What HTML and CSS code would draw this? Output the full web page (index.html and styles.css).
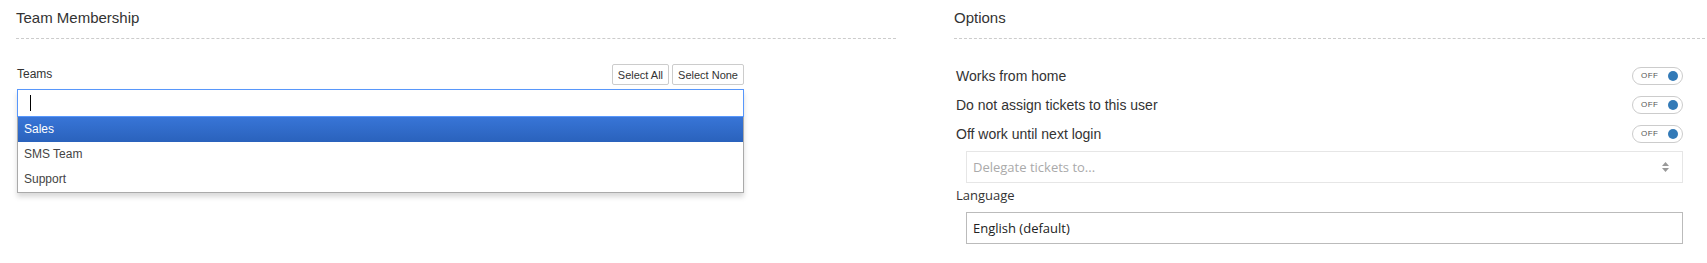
FILE: index.html
```html
<!DOCTYPE html>
<html lang="en">
<head>
  <meta charset="UTF-8">
  <meta name="viewport" content="width=device-width, initial-scale=1.0">
  <title>Agent</title>
  <link rel="stylesheet" href="styles.css">
</head>
<body>
  <div class="page">
    <div class="panel">
      <h3 class="panel-title">Team Membership</h3>
      <div class="teams">
        <div class="teams-head">
          <label class="teams-label">Teams</label>
          <div class="btn-group">
            <button class="btn-small">Select All</button>
            <button class="btn-small">Select None</button>
          </div>
        </div>
        <div class="chooser">
          <div class="chooser-search"><span class="caret-line"></span></div>
          <ul class="chooser-list">
            <li class="chooser-item active">Sales</li>
            <li class="chooser-item">SMS Team</li>
            <li class="chooser-item">Support</li>
          </ul>
        </div>
      </div>
    </div>

    <div class="panel">
      <h3 class="panel-title">Options</h3>
      <div class="options">
        <div class="option-row">
          <span class="option-label">Works from home</span>
          <span class="toggle"><span class="toggle-text">OFF</span><span class="toggle-dot"></span></span>
        </div>
        <div class="option-row">
          <span class="option-label">Do not assign tickets to this user</span>
          <span class="toggle"><span class="toggle-text">OFF</span><span class="toggle-dot"></span></span>
        </div>
        <div class="option-row">
          <span class="option-label">Off work until next login</span>
          <span class="toggle"><span class="toggle-text">OFF</span><span class="toggle-dot"></span></span>
        </div>
        <div class="select-box">
          <span class="placeholder">Delegate tickets to...</span>
          <svg class="updown" width="9" height="12" viewBox="0 0 9 12">
            <path d="M4.5 1 L8 5 L1 5 Z" fill="#999"/>
            <path d="M4.5 11 L8 7 L1 7 Z" fill="#999"/>
          </svg>
        </div>
        <label class="field-label">Language</label>
        <div class="text-box">English (default)</div>
      </div>
    </div>
  </div>
</body>
</html>
```

FILE: styles.css
```css
body {
  margin: 0;
  font-family: 'Liberation Sans', Arial, sans-serif;
  color: #333;
  background: #fff;
}
.page {
  display: grid;
  grid-template-columns: 880px 751px;
  column-gap: 58px;
  padding-left: 16px;
}
.panel-title {
  margin: 0;
  padding: 8px 0 10px;
  font-size: 15px;
  font-weight: normal;
  line-height: 20px;
  color: #333;
  border-bottom: 1px dashed #ccc;
}
.teams {
  width: 728px;
  padding-top: 25px;
}
.teams-head {
  display: flex;
  justify-content: space-between;
  align-items: flex-end;
  height: 21px;
  margin-bottom: 4px;
}
.teams-label {
  font-size: 12px;
  line-height: 14px;
  padding-bottom: 4px;
  padding-left: 1px;
}
.btn-group {
  display: flex;
  gap: 3px;
}
.btn-small {
  margin: 0;
  height: 21px;
  padding: 0 5px;
  font-family: 'Liberation Sans', Arial, sans-serif;
  font-size: 11px;
  color: #333;
  background: #fff;
  border: 1px solid #ccc;
  border-radius: 2px;
}
.chooser {
  margin-left: 1px;
  background: #fff;
  border: 1px solid #aaa;
  border-top: none;
  box-shadow: 0 4px 5px rgba(0, 0, 0, 0.15);
}
.chooser-search {
  height: 26px;
  border: 1px solid #5897fb;
  margin: 0 -1px;
  display: flex;
  align-items: center;
  padding-left: 12px;
}
.caret-line {
  width: 1px;
  height: 16px;
  background: #000;
}
.chooser-list {
  list-style: none;
  margin: 0;
  padding: 0;
}
.chooser-item {
  height: 25px;
  line-height: 25px;
  padding-left: 6px;
  font-size: 12px;
  color: #444;
}
.chooser-item.active {
  color: #fff;
  background: linear-gradient(#3875d7, #2a62bc);
}
.options {
  padding-top: 22px;
  padding-right: 22px;
}
.option-row {
  display: flex;
  justify-content: space-between;
  align-items: center;
  height: 29px;
}
.option-label {
  font-size: 14px;
  padding-left: 2px;
}
.toggle {
  box-sizing: border-box;
  width: 51px;
  height: 18px;
  border: 1px solid #ccc;
  border-radius: 9px;
  display: flex;
  align-items: center;
  justify-content: space-between;
  padding: 0 4px 0 8px;
}
.toggle-text {
  font-size: 8px;
  color: #555;
  letter-spacing: 0.5px;
}
.toggle-dot {
  width: 10px;
  height: 10px;
  border-radius: 50%;
  background: #337ab7;
}
.select-box,
.text-box {
  box-sizing: border-box;
  margin-left: 12px;
  height: 32px;
  display: flex;
  align-items: center;
  padding: 0 12px 0 6px;
  font-family: 'Open Sans', sans-serif;
  font-size: 13px;
}
.select-box {
  margin-top: 3px;
  border: 1px solid #e6e6e6;
  justify-content: space-between;
}
.placeholder {
  color: #aaa;
}
.field-label {
  display: block;
  font-family: 'Open Sans', sans-serif;
  font-size: 13px;
  line-height: 18px;
  padding: 3px 0 0 2px;
  margin-bottom: 8px;
}
.text-box {
  border: 1px solid #bbb;
  color: #222;
}
```
